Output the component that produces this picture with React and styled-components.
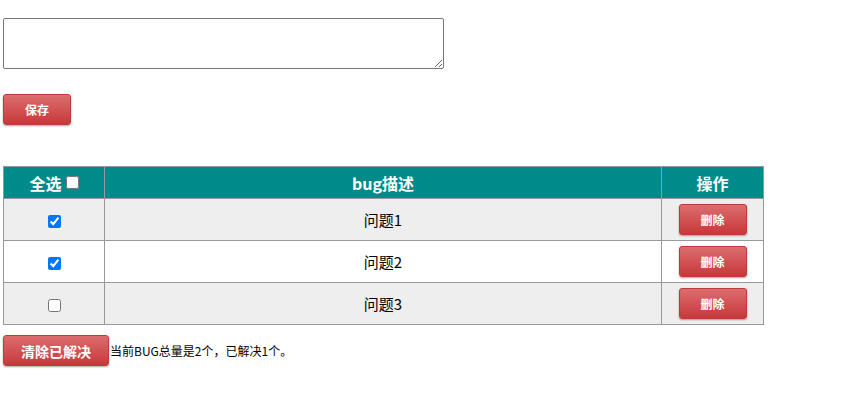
import styled, { createGlobalStyle } from "styled-components";
import { useState } from "react";

const GlobalStyle = createGlobalStyle`
  body {
    margin: 0;
    padding: 18px 3px;
    font-family: "Noto Sans CJK SC", "Noto Sans", sans-serif;
    color: #000;
    background: #fff;
  }
`;

const Editor = styled.textarea`
  display: block;
  width: 441px;
  height: 51px;
  box-sizing: border-box;
  border: 1px solid #767676;
  border-radius: 2px;
  resize: both;
  margin: 0 0 25px;
`;

const RedButton = styled.button`
  display: inline-block;
  height: 31px;
  width: ${(p) => p.$w || 68}px;
  padding: 0;
  border: 1px solid #c0393b;
  border-radius: 3px;
  background: linear-gradient(#dc6d6f, #c8383a);
  box-shadow: 0 1px 2px rgba(0, 0, 0, 0.35);
  color: #fff;
  font-family: "Noto Sans CJK SC", sans-serif;
  font-weight: bold;
  font-size: ${(p) => p.$size || 12}px;
  cursor: pointer;
`;

const SaveRow = styled.div`
  display: flex;
  margin-bottom: 41px;
`;

const Table = styled.table`
  border-collapse: collapse;
  width: 760px;
  table-layout: fixed;
  text-align: center;
`;

const HeadCell = styled.th`
  background: #008b8b;
  color: #fff;
  font-size: 16px;
  font-weight: bold;
  height: 31px;
  padding: 0;
  border: 1px solid #999;
  width: ${(p) => p.$w}px;
`;

const Row = styled.tr`
  background: ${(p) => (p.$odd ? "#eeeeee" : "#fff")};
`;

const Cell = styled.td`
  border: 1px solid #999;
  height: 41px;
  padding: 0;
  font-size: 15px;
`;

const HeadLabel = styled.span`
  display: inline-flex;
  align-items: center;
  gap: 4px;
`;

const Box = styled.input`
  margin: 0;
  width: 13px;
  height: 13px;
  vertical-align: middle;
`;

const Footer = styled.div`
  display: flex;
  align-items: center;
  margin-top: 10px;
  gap: 1px;
`;

const Summary = styled.span`
  font-size: 12px;
`;

export default function App() {
  const [bugs, setBugs] = useState([
    { id: 1, text: "问题1", done: true },
    { id: 2, text: "问题2", done: true },
    { id: 3, text: "问题3", done: false },
  ]);

  const toggle = (id) =>
    setBugs(bugs.map((b) => (b.id === id ? { ...b, done: !b.done } : b)));

  return (
    <>
      <GlobalStyle />
      <Editor />
      <SaveRow>
        <RedButton>保存</RedButton>
      </SaveRow>
      <Table>
        <thead>
          <tr>
            <HeadCell $w={100}>
              <HeadLabel>
                全选<Box type="checkbox" />
              </HeadLabel>
            </HeadCell>
            <HeadCell $w={556}>bug描述</HeadCell>
            <HeadCell $w={101}>操作</HeadCell>
          </tr>
        </thead>
        <tbody>
          {bugs.map((b, i) => (
            <Row key={b.id} $odd={i % 2 === 0}>
              <Cell>
                <Box type="checkbox" checked={b.done} onChange={() => toggle(b.id)} />
              </Cell>
              <Cell>{b.text}</Cell>
              <Cell>
                <RedButton>删除</RedButton>
              </Cell>
            </Row>
          ))}
        </tbody>
      </Table>
      <Footer>
        <RedButton $w={106} $size={14}>清除已解决</RedButton>
        <Summary>当前BUG总量是2个，已解决1个。</Summary>
      </Footer>
    </>
  );
}
